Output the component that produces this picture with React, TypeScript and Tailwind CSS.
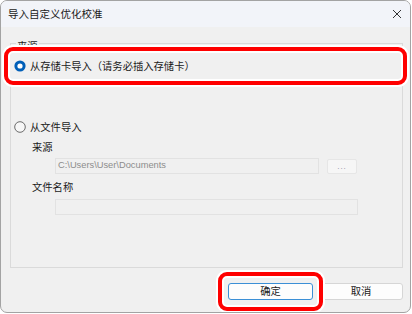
import React from "react";

const cjk = { fontFamily: '"Noto Sans CJK SC", "Noto Sans", sans-serif' };

function RadioChecked() {
  return (
    <svg width="12" height="12" viewBox="0 0 12 12" className="shrink-0">
      <circle cx="6" cy="6" r="5.6" fill="#005fb8" />
      <circle cx="6" cy="6" r="2.6" fill="#ffffff" />
    </svg>
  );
}

function RadioEmpty() {
  return (
    <svg width="12" height="12" viewBox="0 0 12 12" className="shrink-0">
      <circle cx="6" cy="6" r="5.3" fill="#f7f7f7" stroke="#5c5c5c" strokeWidth="0.9" />
    </svg>
  );
}

export default function App() {
  return (
    <div className="w-[412px] h-[314px] bg-white" style={cjk}>
      <div className="w-[411px] h-[313px] border border-[#a3a3a3] rounded-[7px] overflow-hidden flex flex-col bg-[#f0f0f0]">
        {/* Title bar */}
        <div className="h-[26px] bg-[#f2f4f9] flex items-center justify-between pl-[7px] pr-[8px] shrink-0">
          <span className="text-[10.5px] text-[#1a1a1a] leading-none">导入自定义优化校准</span>
          <svg width="10" height="10" viewBox="0 0 10 10">
            <path d="M1 1 L9 9 M9 1 L1 9" stroke="#333" strokeWidth="1" />
          </svg>
        </div>

        {/* Body */}
        <div className="flex-1 flex flex-col pl-[9px]">
          {/* Group box */}
          <div className="relative mt-[16px] w-[393px] h-[225px] border border-[#dadada]">
            <span className="absolute -top-[5px] left-[5px] px-[1px] bg-[#f0f0f0] text-[10.3px] text-[#1a1a1a] leading-[14px]">
              来源
            </span>
            {/* highlighted row */}
            <div className="relative mt-[3px] -ml-[7px] w-[403px] h-[38px] border-[4px] border-[#ff0000] rounded-[9px] shadow-[0_0_0_2px_#ffffff,inset_0_0_0_2px_#ffffff] bg-[#f0f0f0] flex items-center pl-[6px] gap-[4px]">
              <RadioChecked />
              <span className="text-[10.3px] text-[#1a1a1a] leading-none">从存储卡导入（请务必插入存储卡）</span>
            </div>

            {/* file import */}
            <div className="flex items-center gap-[4px] mt-[34px] pl-[3px]">
              <RadioEmpty />
              <span className="text-[10.3px] text-[#1a1a1a] leading-[16px]">从文件导入</span>
            </div>
            <div className="pl-[21px] mt-[4px] text-[10.3px] text-[#1a1a1a] leading-[16px]">来源</div>
            <div className="flex items-center mt-[3px] pl-[44px]">
              <div className="w-[264px] h-[16px] border border-[#e2e2e2] bg-[#f0f0f0] flex items-center pl-[2px]">
                <span className="text-[9.3px] text-[#8c8c8c] leading-none" style={{ fontFamily: '"Liberation Sans", Arial, sans-serif' }}>
                  C:\Users\User\Documents
                </span>
              </div>
              <div className="ml-[8px] w-[30px] h-[15px] rounded-[2px] border border-[#e6e6e6] bg-[#f6f6f6] flex items-end justify-center pb-[2px]">
                <span className="text-[8px] leading-none text-[#8a8a9a] tracking-[1px]" style={{ fontFamily: '"Liberation Sans", Arial, sans-serif' }}>...</span>
              </div>
            </div>
            <div className="pl-[21px] mt-[5px] text-[10.3px] text-[#1a1a1a] leading-[16px]">文件名称</div>
            <div className="pl-[44px] mt-[4px]">
              <div className="w-[303px] h-[16px] border border-[#e2e2e2] bg-[#f0f0f0]" />
            </div>
          </div>

          {/* Buttons */}
          <div className="flex mt-[15px] pl-[218px] gap-[6px]">
            <div className="relative">
              <div className="w-[85px] h-[17px] rounded-[3px] border border-[#3b8fd6] bg-[#fdfdfd] flex items-center justify-center text-[10.3px] text-[#1a1a1a] leading-none">
                确定
              </div>
              <div className="absolute -left-[10px] -top-[11px] w-[105px] h-[39px] border-[4px] border-[#ff0000] rounded-[9px] shadow-[0_0_0_2px_#ffffff,inset_0_0_0_2px_#ffffff] pointer-events-none" />
            </div>
            <div className="w-[84px] h-[17px] rounded-[3px] border border-[#d6d6d6] bg-[#fdfdfd] flex items-center justify-center text-[10.3px] text-[#1a1a1a] leading-none">
              取消
            </div>
          </div>
        </div>
      </div>
    </div>
  );
}
